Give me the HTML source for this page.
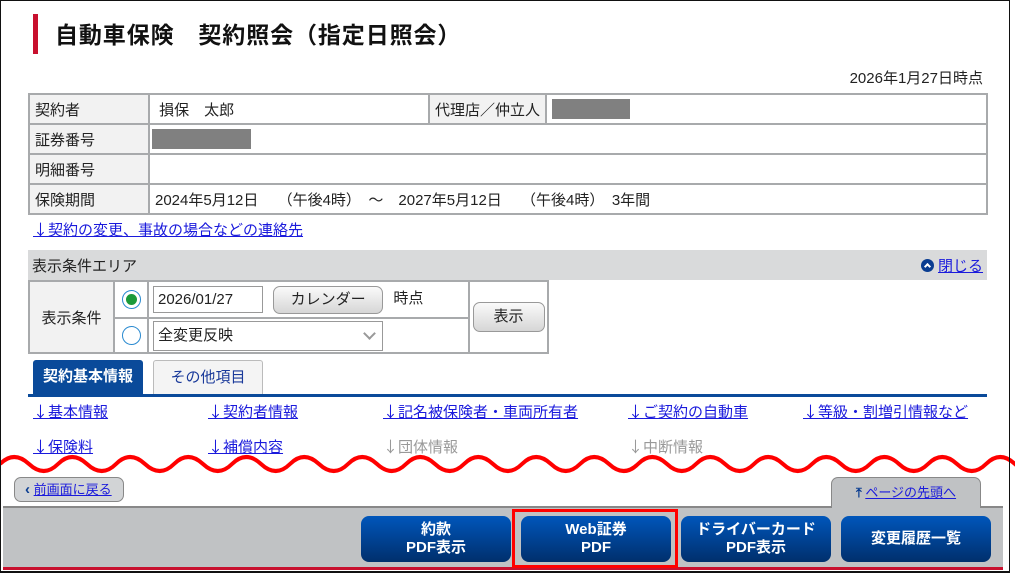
<!DOCTYPE html>
<html><head><meta charset="utf-8"><style>
*{margin:0;padding:0;box-sizing:border-box}
body{width:1015px;height:573px;background:#fff;font-family:"Liberation Sans","Noto Sans CJK JP",sans-serif;font-size:15px;color:#222;position:relative;overflow:hidden}
.abs{position:absolute}
a{color:#1a1adc;text-decoration:underline}
.ar{font-family:"Noto Sans CJK JP",sans-serif}
.frame{left:0;top:0;width:1010px;height:573px;border:1px solid #111;border-bottom:2px solid #111}
.title{left:33px;top:14px;width:5px;height:40px;background:#c8102e}
.ttext{left:55px;top:16px;font-size:23px;font-weight:bold;color:#111;letter-spacing:0.9px}
table{border-collapse:collapse}
.info td{border:2px solid #a8aaac;height:30px;padding:0 5px;font-size:15px}
.info td.l{background:#f2f2f2;width:120px}
.gbox{display:inline-block;background:#808080;height:20px;vertical-align:middle}
.bar{left:28px;top:250px;width:959px;height:30px;background:#d9dadb}
.cond td{border:2px solid #a8aaac;padding:0}
.btn{display:inline-block;border:1px solid #999;border-radius:7px;background:linear-gradient(#fafafa,#d6d6d6);text-align:center}
.radio{display:inline-block;width:19px;height:19px;border-radius:50%;border:1px solid #2a8ad0;background:#fff;position:relative;vertical-align:middle}
.tab{top:360px;height:35px;text-align:center;line-height:34px;font-size:15px}
.links a{position:absolute}
.gray{color:#999;position:absolute}
.fb{top:516px;width:150px;height:46px;border-radius:8px;background:linear-gradient(#0056bb,#002f6c);color:#fff;font-weight:bold;text-align:center;font-size:15px;line-height:18px;display:flex;align-items:center;justify-content:center}
</style></head><body>
<div class="abs title"></div>
<div class="abs ttext">自動車保険　契約照会（指定日照会）</div>
<div class="abs" style="right:32px;top:67px;font-size:15px">2026年1月27日時点</div>
<table class="abs info" style="left:28px;top:93px;width:960px">
<tr><td class="l">契約者</td><td style="width:280px">&nbsp;損保　太郎</td><td class="l" style="width:117px;background:#f2f2f2">代理店／仲立人</td><td><span class="gbox" style="width:78px"></span></td></tr>
<tr><td class="l">証券番号</td><td colspan="3" style="padding-left:2px"><span class="gbox" style="width:99px"></span></td></tr>
<tr><td class="l">明細番号</td><td colspan="3"></td></tr>
<tr><td class="l">保険期間</td><td colspan="3" style="word-spacing:0">2024年5月12日　&nbsp;（午後4時）　～　2027年5月12日　&nbsp;（午後4時）　3年間</td></tr>
</table>
<a class="abs" style="left:33px;top:219px"><span class="ar">↓</span>契約の変更、事故の場合などの連絡先</a>
<div class="abs bar"><span style="position:absolute;left:4px;top:5px">表示条件エリア</span>
<span style="position:absolute;right:4px;top:5px"><span style="display:inline-block;width:13px;height:13px;border-radius:50%;background:#0a3d91;vertical-align:-1px;position:relative"><span style="position:absolute;left:4px;top:4.5px;width:5px;height:5px;border-left:2px solid #fff;border-top:2px solid #fff;transform:rotate(45deg)"></span></span> <a>閉じる</a></span></div>
<table class="abs cond" style="left:28px;top:280px;width:521px;height:74px">
<tr style="height:37px"><td rowspan="2" style="width:85px;background:#f2f2f2;text-align:center">表示条件</td>
<td style="width:34px;text-align:center"><span class="radio"><span style="position:absolute;left:3px;top:3px;width:11px;height:11px;border-radius:50%;background:#1a9a3a"></span></span></td>
<td style="width:321px;padding-left:4px"><span style="display:inline-block;border:1px solid #999;width:110px;height:27px;line-height:25px;padding-left:4px;vertical-align:middle">2026/01/27</span>
<span class="btn" style="width:110px;height:28px;line-height:26px;margin-left:6px;vertical-align:middle">カレンダー</span>
<span style="margin-left:6px">時点</span></td>
<td rowspan="2" style="text-align:center"><span class="btn" style="width:72px;height:30px;line-height:28px">表示</span></td></tr>
<tr><td style="text-align:center"><span class="radio"></span></td>
<td style="padding-left:4px"><span style="display:inline-block;border:1px solid #999;width:230px;height:30px;line-height:28px;padding-left:4px;position:relative">全変更反映<span style="position:absolute;right:8px;top:7px;width:9px;height:9px;border-right:2px solid #999;border-bottom:2px solid #999;transform:rotate(45deg)"></span></span></td></tr>
</table>
<div class="abs tab" style="left:33px;width:110px;background:#0a4a9a;color:#fff;font-weight:bold;border-radius:3px 3px 0 0">契約基本情報</div>
<div class="abs tab" style="left:153px;width:110px;background:#f4f4f4;border:1px solid #bbb;border-bottom:none;color:#1a3a9a;border-radius:3px 3px 0 0">その他項目</div>
<div class="abs" style="left:28px;top:394px;width:959px;height:3px;background:#0a4a9a"></div>
<div class="links">
<a style="left:33px;top:401px"><span class="ar">↓</span>基本情報</a>
<a style="left:208px;top:401px"><span class="ar">↓</span>契約者情報</a>
<a style="left:383px;top:401px"><span class="ar">↓</span>記名被保険者・車両所有者</a>
<a style="left:628px;top:401px"><span class="ar">↓</span>ご契約の自動車</a>
<a style="left:803px;top:401px"><span class="ar">↓</span>等級・割増引情報など</a>
<a style="left:33px;top:436px"><span class="ar">↓</span>保険料</a>
<a style="left:208px;top:436px"><span class="ar">↓</span>補償内容</a>
<span class="gray" style="left:383px;top:436px"><span class="ar">↓</span>団体情報</span>
<span class="gray" style="left:628px;top:436px"><span class="ar">↓</span>中断情報</span>
</div>
<svg class="abs" style="left:0;top:450px" width="1015" height="30"><path d="M0 14 q14 -14 29 0 t29 0 t29 0 t29 0 t29 0 t29 0 t29 0 t29 0 t29 0 t29 0 t29 0 t29 0 t29 0 t29 0 t29 0 t29 0 t29 0 t29 0 t29 0 t29 0 t29 0 t29 0 t29 0 t29 0 t29 0 t29 0 t29 0 t29 0 t29 0 t29 0 t29 0 t29 0 t29 0 t29 0 t29 0 t29 0" fill="none" stroke="#f00" stroke-width="4"/></svg>
<div class="abs" style="left:14px;top:477px;width:110px;height:25px;border:1px solid #888;border-radius:7px;background:#d2d4d6;font-size:13px;line-height:23px;padding-left:10px"><b style="color:#0a3d91;font-size:15px">‹</b> <a>前画面に戻る</a></div>
<div class="abs" style="left:831px;top:477px;width:150px;height:31px;border:1px solid #888;border-bottom:none;border-radius:7px 7px 0 0;background:#c0c2c4;font-size:13px;text-align:center;line-height:30px;z-index:2"><b style="color:#0a3d91">⤒</b> <a>ページの先頭へ</a></div>
<div class="abs" style="left:3px;top:506px;width:1000px;height:63px;background:#c0c2c4;border-top:2px solid #888"></div>
<div class="abs" style="left:3px;top:567px;width:1000px;height:3px;background:#c8102e"></div>
<div class="abs fb" style="left:361px">約款<br>PDF表示</div>
<div class="abs fb" style="left:521px">Web証券<br>PDF</div>
<div class="abs fb" style="left:681px">ドライバーカード<br>PDF表示</div>
<div class="abs fb" style="left:841px">変更履歴一覧</div>
<div class="abs" style="left:512px;top:509px;width:166px;height:59px;border:3px solid #f00"></div>
<div class="abs frame"></div>
</body></html>
